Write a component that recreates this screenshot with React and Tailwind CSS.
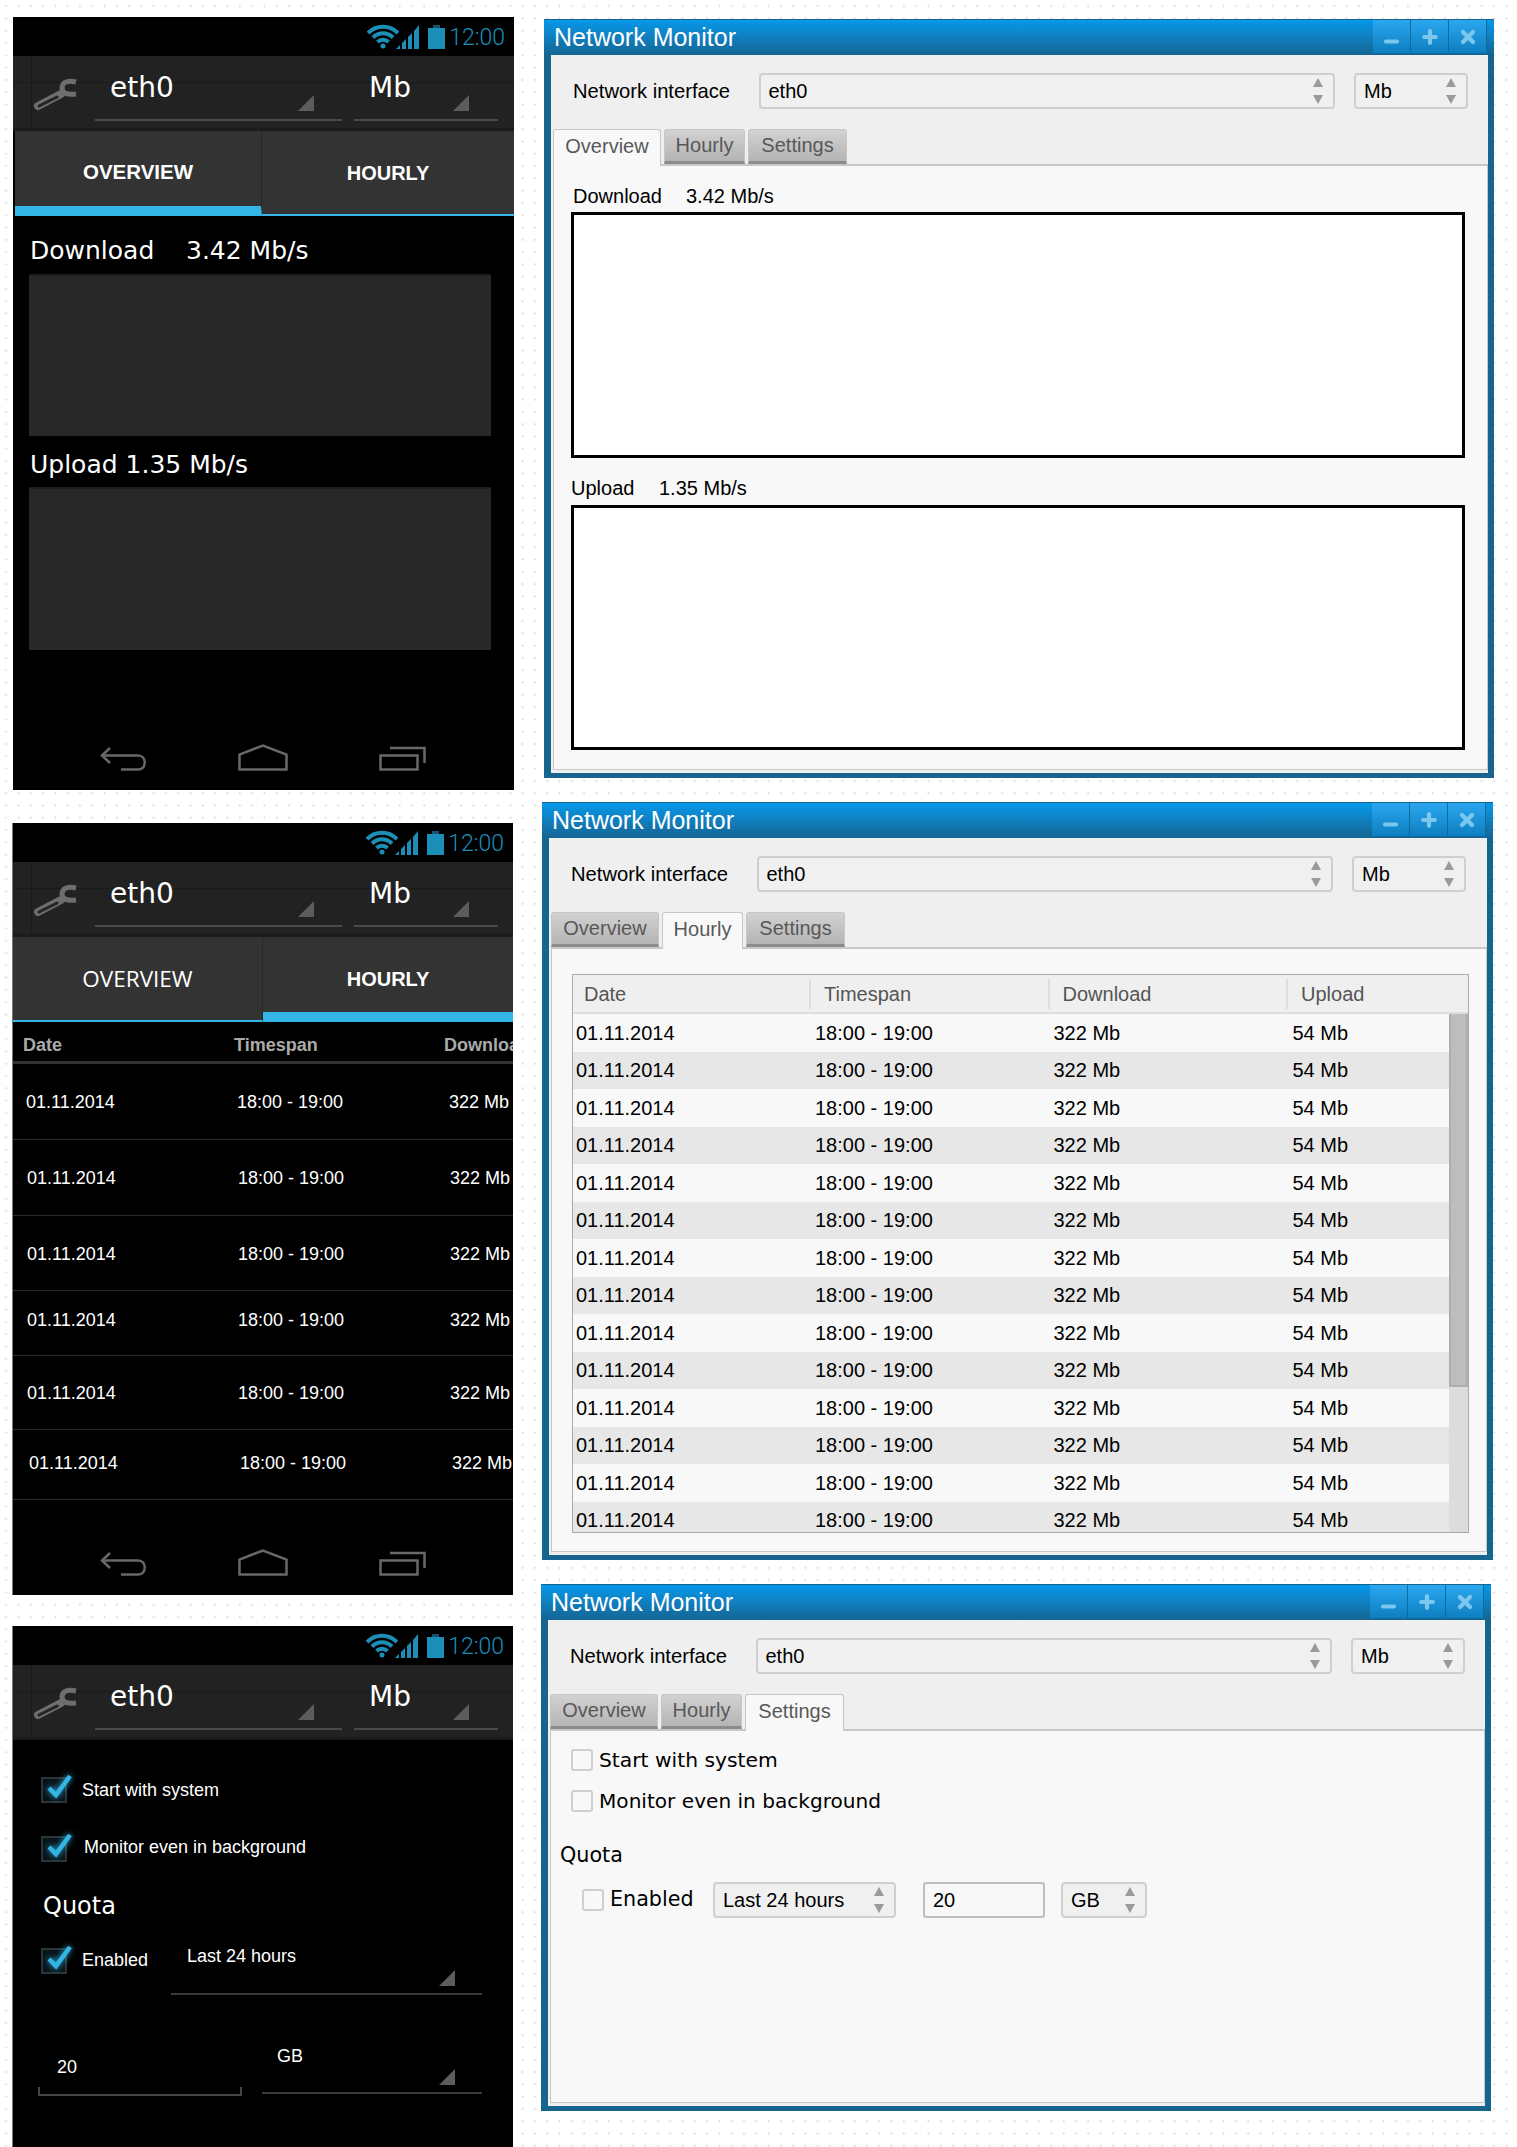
import { Minus, Plus, X } from "lucide-react"

const dejavu = "[font-family:'DejaVu_Sans',sans-serif]"

function Wrench() {
  return (
    <svg width="46" height="34" viewBox="0 0 46 34" fill="none" className="shrink-0">
      <path d="M44 4 C36 2 30 4 30 10 C30 15 35 17 44 16" stroke="#6e6e6e" strokeWidth="5" />
      <path d="M29 16 L6 28" stroke="#6e6e6e" strokeWidth="8" strokeLinecap="round" />
      <path d="M25 19 L7 28" stroke="#242424" strokeWidth="3" strokeLinecap="round" />
    </svg>
  )
}

function StatusBar() {
  return (
    <div className="h-[39px] flex items-center justify-end pr-[9px] pt-[2px]">
      <svg width="32" height="25" viewBox="0 0 32 25" fill="none" stroke="#1b8fb8" className="mr-[-3px] mt-[-2px]">
        <path d="M1 9 A21 21 0 0 1 31 9" strokeWidth="4" />
        <path d="M6 13.500 A14 14 0 0 1 26 13.500" strokeWidth="4" />
        <path d="M10.500 18 A8 8 0 0 1 21.500 18" strokeWidth="4" />
        <circle cx="16" cy="22" r="2.500" fill="#1b8fb8" stroke="none" />
      </svg>
      <svg width="24" height="24" viewBox="0 0 24 24" fill="#1b8fb8" className="mr-[8px] mt-[-2px]">
        <polygon points="0,24 4,20 4,24" />
        <polygon points="6,24 6,18 10,14 10,24" />
        <polygon points="12,24 12,12 16,8 16,24" />
        <polygon points="18,24 18,6 23,0 23,24" />
      </svg>
      <svg width="17" height="24" viewBox="0 0 17 24" className="mr-[4px] mt-[-2px]">
        <rect x="5" y="0" width="7" height="3" fill="#14566e" />
        <rect x="0" y="3" width="17" height="21" fill="#1b8fb8" />
      </svg>
      <span className="text-[23px] leading-none text-[#1b8fb8] [font-family:Roboto,sans-serif] font-light">12:00</span>
    </div>
  )
}

function Triangle({ className }) {
  return (
    <svg width="16" height="16" viewBox="0 0 16 16" className={"absolute " + className}>
      <polygon points="0,16 16,0 16,16" fill="#5c5c5c" />
    </svg>
  )
}

function ActionBar() {
  return (
    <div className="relative h-[75px] bg-[#222222] flex pl-[19px] border-b-[3px] border-[#1b1b1b]">
      <div className="absolute left-[18px] top-0 bottom-0 w-px bg-[#1a1a1a]" />
      <div className="absolute left-0 right-0 top-[26px] h-px bg-[#1a1a1a]" />
      <div className="relative mt-[22px]">
        <Wrench />
      </div>
      <div className={"relative ml-[17px] mt-[8px] w-[247px] h-[57px] pl-[15px] pt-[7px] border-b-[2px] border-[#4a4a4a] text-white text-[28px] leading-[34px] " + dejavu}>
        eth0
        <Triangle className="right-[28px] bottom-[8px]" />
      </div>
      <div className={"relative ml-[12px] mt-[8px] w-[144px] h-[57px] pl-[15px] pt-[7px] border-b-[2px] border-[#4a4a4a] text-white text-[28px] leading-[34px] " + dejavu}>
        Mb
        <Triangle className="right-[29px] bottom-[8px]" />
      </div>
    </div>
  )
}

function NavBar() {
  return (
    <div className="flex items-end pl-[87px] gap-[91px] pb-[19px]">
      <svg width="47" height="25" viewBox="0 0 47 25" fill="none" stroke="#686868" strokeWidth="2.500">
        <path d="M10 2 L2 9.500 L10 17" />
        <path d="M2 9.500 H38 C47 9.500 47 23.500 38 23.500 H21" />
      </svg>
      <svg width="50" height="27" viewBox="0 0 50 27" fill="none" stroke="#686868" strokeWidth="2.500">
        <path d="M1.500 25.500 V10.500 L25 1.500 L48.500 10.500 V25.500 Z" />
      </svg>
      <svg width="47" height="25" viewBox="0 0 47 25" fill="none" stroke="#686868" strokeWidth="2.500">
        <rect x="1.500" y="9.500" width="37" height="14" />
        <path d="M11 2 H45.500 V17" />
      </svg>
    </div>
  )
}

function PhoneTabs({ active }) {
  const overviewOn = active === "overview"
  return (
    <div className={"flex h-[85px] bg-[#333333] " + (overviewOn ? "ml-[2px]" : "")}>
      <div className={"flex-1 flex items-center justify-center border-r border-[#262626] text-white " + (overviewOn ? "border-b-[10px] border-b-[#33b5e5] pt-[8px] font-bold text-[20.500px]" : "border-b-[2px] border-b-[#33b5e5] text-[22.500px] [font-family:'Open_Sans',sans-serif]")}>
        OVERVIEW
      </div>
      <div className={"flex items-center justify-center text-white text-[20px] font-bold " + (overviewOn ? "w-[252px] border-b-[2px] border-b-[#33b5e5]" : "w-[250px] border-b-[10px] border-b-[#33b5e5] pt-[8px]")}>
        HOURLY
      </div>
    </div>
  )
}

function Phone({ className, edge, children, nav = true }) {
  return (
    <div className={"w-[501px] bg-black flex flex-col overflow-hidden " + className + " " + edge}>
      <StatusBar />
      <ActionBar />
      <div className="flex-1 min-h-0">{children}</div>
      {nav && <NavBar />}
    </div>
  )
}

function PhoneOverview() {
  return (
    <div>
      <PhoneTabs active="overview" />
      <div className={"pl-[17px] mt-[19px] h-[32px] text-white text-[25px] leading-[32px] flex " + dejavu}>
        <span className="w-[156px]">Download</span>
        <span>3.42 Mb/s</span>
      </div>
      <div className="ml-[16px] mt-[7px] w-[462px] h-[162px] bg-[#282828] border-t-2 border-[#1e1e1e]" />
      <div className={"pl-[17px] mt-[13px] h-[32px] text-white text-[25px] leading-[32px] " + dejavu}>Upload 1.35 Mb/s</div>
      <div className="ml-[16px] mt-[6px] w-[462px] h-[163px] bg-[#282828] border-t-2 border-[#1e1e1e]" />
    </div>
  )
}

const phoneRows = [
  "h-[76px] pl-[13px] pt-[2px]",
  "h-[76px] pl-[14px] pt-[2px]",
  "h-[75px] pl-[14px] pt-[2px]",
  "h-[65px] pl-[14px] pb-[6px]",
  "h-[74px] pl-[14px] pt-[2px]",
  "h-[70px] pl-[16px] pb-[2px]",
]

function PhoneHourly() {
  return (
    <div>
      <PhoneTabs active="hourly" />
      <div className="flex items-center h-[42px] pl-[10px] pt-[8px] text-[18px] font-bold text-[#aaaaaa] border-b-[3px] border-[#333333] whitespace-nowrap">
        <span className="w-[211px] shrink-0">Date</span>
        <span className="w-[210px] shrink-0">Timespan</span>
        <span>Download</span>
      </div>
      {phoneRows.map((row) => (
        <div key={row} className={"flex items-center text-white text-[18px] border-b border-[#2a2a2a] whitespace-nowrap " + row}>
          <span className="w-[211px] shrink-0">01.11.2014</span>
          <span className="w-[212px] shrink-0">18:00 - 19:00</span>
          <span>322 Mb</span>
        </div>
      ))}
    </div>
  )
}

function PhoneCheck({ className }) {
  return (
    <div className={"relative w-[26px] h-[26px] shrink-0 border-2 border-[#2b3438] bg-[#071319] " + className}>
      <svg width="28" height="28" viewBox="0 0 28 28" fill="none" className="absolute left-[3px] top-[-7px] drop-shadow-[0_0_3px_#33b5e5]">
        <path d="M3 16 L10 23 L24 4" stroke="#33b5e5" strokeWidth="4.500" />
      </svg>
    </div>
  )
}

function PhoneSettings() {
  return (
    <div className="text-white text-[18px]">
      <div className="flex items-center pt-[35px] pl-[28px] gap-[15px]">
        <PhoneCheck />
        <span className="mt-[2px]">Start with system</span>
      </div>
      <div className="flex items-center mt-[30px] pl-[28px] gap-[17px]">
        <PhoneCheck />
        <span className="mb-[2px]">Monitor even in background</span>
      </div>
      <div className={"mt-[28px] pl-[30px] h-[30px] text-[24px] leading-[30px] " + dejavu}>Quota</div>
      <div className="flex items-start mt-[20px] pl-[28px]">
        <PhoneCheck className="mt-[7px]" />
        <span className="ml-[15px] mt-[7px] leading-[24px] w-[89px]">Enabled</span>
        <div className="relative w-[311px] h-[54px] pl-[16px] pt-[3px] leading-[24px] border-b-[2px] border-[#3a3a3a]">
          Last 24 hours
          <Triangle className="right-[27px] bottom-[7px]" />
        </div>
      </div>
      <div className="flex items-start mt-[49px] pl-[25px]">
        <div className="w-[204px] h-[52px]">
          <div className="pl-[19px] pt-[11px] h-[43px] leading-[24px]">20</div>
          <div className="h-[9px] border-x-2 border-b-2 border-[#444444]" />
        </div>
        <div className="relative ml-[20px] w-[220px] h-[50px] pl-[15px] leading-[24px] border-b-[2px] border-[#3a3a3a]">
          GB
          <Triangle className="right-[27px] bottom-[7px]" />
        </div>
      </div>
    </div>
  )
}

function Arrows() {
  return (
    <svg width="10" height="26" viewBox="0 0 10 26" fill="#9a9a9a" className="absolute right-[10px] top-[3px]">
      <polygon points="5,0 10,9 0,9" />
      <polygon points="0,17 10,17 5,26" />
    </svg>
  )
}

function Combo({ className, children }) {
  return (
    <div className={"relative h-[36px] flex items-center pl-[8px] border-2 border-[#cfcfcf] rounded-[4px] bg-[#f0f0f0] text-[20px] text-black " + className}>
      {children}
      <Arrows />
    </div>
  )
}

function WinTab({ label, active, className }) {
  return (
    <div
      className={
        "flex items-center justify-center rounded-t-[3px] border-x border-t border-[#c6c6c6] text-[20px] text-[#585858] " +
        (active
          ? "bg-[#f8f8f8] relative z-10 mb-[-2px] h-[37px] pb-[5px]"
          : "h-[35px] pb-[2px] bg-linear-to-b from-[#d2d2d2] to-[#b4b4b4] border-b-[3px] border-b-[#8c8c8c]") +
        " " + className
      }
    >
      {label}
    </div>
  )
}

function Window({ tab, className, children }) {
  return (
    <div className={"bg-[#15658f] flex flex-col " + className}>
      <div className="h-[36px] shrink-0 flex items-start pl-[10px] pr-[7px] bg-linear-to-b from-[#0399ea] to-[#146594] border-t border-[#15658f]">
        <span className="flex-1 text-white text-[25px] leading-[35px]">Network Monitor</span>
        {[0, 1, 2].map((i) => (
          <div key={i} className="w-[38px] h-[33px] flex items-center justify-center bg-linear-to-b from-[#2aa7f0] to-[#0b7fc0] border-r border-[#0f6a9e] text-[#7cc7ee]">
            {i === 0 && <Minus size={19} strokeWidth={5} className="mt-[9px]" />}
            {i === 1 && <Plus size={20} strokeWidth={5} />}
            {i === 2 && <X size={20} strokeWidth={5} />}
          </div>
        ))}
      </div>
      <div className="flex-1 min-h-0 ml-[7px] mr-[6px] mb-[5px] bg-[#efefef] flex flex-col">
        <div className="flex items-center pt-[18px] pl-[22px]">
          <span className="w-[185.500px] text-[20.200px] text-black">Network interface</span>
          <Combo className="w-[576px]">eth0</Combo>
          <Combo className="ml-[19.500px] w-[114px]">Mb</Combo>
        </div>
        <div className="flex items-end mt-[20px] ml-[2px] gap-[3px]">
          <WinTab label="Overview" active={tab === "overview"} className="w-[108px]" />
          <WinTab label="Hourly" active={tab === "hourly"} className="w-[81px]" />
          <WinTab label="Settings" active={tab === "settings"} className="w-[99px]" />
        </div>
        <div className="flex-1 min-h-0 ml-[2px] mb-[3px] bg-[#f8f8f8] border-x border-b border-t-2 border-[#c8c8c8]">
          {children}
        </div>
      </div>
    </div>
  )
}

function WinOverview() {
  return (
    <div className="text-[20px] text-black">
      <div className="flex pl-[19px] pt-[18px] leading-[24px]">
        <span className="w-[113px]">Download</span>
        <span>3.42 Mb/s</span>
      </div>
      <div className="ml-[17px] mt-[4px] w-[894px] h-[246px] bg-white border-[3px] border-black" />
      <div className="flex pl-[17px] mt-[18px] leading-[24px]">
        <span className="w-[88px]">Upload</span>
        <span>1.35 Mb/s</span>
      </div>
      <div className="ml-[17px] mt-[5px] w-[894px] h-[245px] bg-white border-[3px] border-black" />
    </div>
  )
}

const tableRows = Array.from({ length: 14 }, (_, i) => i)

function WinHourly() {
  return (
    <div className="ml-[20px] mt-[25px] w-[897px] h-[559px] border border-[#aaaaaa] bg-[#f8f8f8] flex flex-col overflow-hidden text-[20px]">
      <div className="h-[39px] shrink-0 flex items-center pt-[1px] bg-[#efefef] border-b-2 border-[#dddddd] text-[#555555]">
        <span className="w-[236px] pl-[11px]">Date</span>
        <span className="w-[238.500px] pl-[13px] border-l-2 border-[#dddddd]">Timespan</span>
        <span className="w-[238.500px] pl-[13px] border-l-2 border-[#dddddd]">Download</span>
        <span className="flex-1 pl-[13px] border-l-2 border-[#dddddd]">Upload</span>
      </div>
      <div className="flex-1 min-h-0 flex">
        <div className="flex-1 overflow-hidden">
          {tableRows.map((i) => (
            <div key={i} className={"h-[37.500px] shrink-0 pl-[3px] flex items-center text-black " + (i % 2 ? "bg-[#e7e7e7]" : "bg-[#f8f8f8]")}>
              <span className="w-[239px]">01.11.2014</span>
              <span className="w-[238.500px]">18:00 - 19:00</span>
              <span className="w-[239px]">322 Mb</span>
              <span>54 Mb</span>
            </div>
          ))}
        </div>
        <div className="w-[19px] bg-[#dcdcdc]">
          <div className="h-[373px] bg-[#bdbdbd] border-x-2 border-b-2 border-[#aeaeae]" />
        </div>
      </div>
    </div>
  )
}

function WinCheck({ className }) {
  return <div className={"w-[22px] h-[22px] shrink-0 rounded-[3px] border-2 border-[#cfcfcf] bg-[#f8f8f8] " + className} />
}

function WinSettings() {
  return (
    <div className={"text-[20.700px] text-black " + dejavu}>
      <div className="flex items-center h-[30px] mt-[14px] pl-[20px] gap-[6px] text-[20.300px]">
        <WinCheck />
        <span>Start with system</span>
      </div>
      <div className="flex items-center h-[30px] mt-[11px] pl-[20px] gap-[6px] text-[20.100px]">
        <WinCheck />
        <span>Monitor even in background</span>
      </div>
      <div className="h-[30px] leading-[30px] mt-[24px] pl-[9px]">Quota</div>
      <div className="flex items-center mt-[12px] pl-[31px]">
        <WinCheck />
        <span className="ml-[6px] w-[103px]">Enabled</span>
        <div className="[font-family:'Liberation_Sans',sans-serif] flex items-center">
          <Combo className="w-[183px]">Last 24 hours</Combo>
          <div className="ml-[27px] w-[122px] h-[36px] flex items-center pl-[8px] border-2 border-[#bdbdbd] rounded-[3px] bg-[#f8f8f8] text-[20px]">20</div>
          <Combo className="ml-[16px] w-[86px]">GB</Combo>
        </div>
      </div>
    </div>
  )
}

export default function App() {
  return (
    <div className="w-[1517px] h-[2147px] overflow-hidden flex items-start bg-white bg-[radial-gradient(circle,#e2e2e2_1px,transparent_1px)] bg-size-[12.300px_12.300px] [font-family:'Liberation_Sans',sans-serif]">
      <div className="w-[530px] shrink-0 flex flex-col">
        <Phone className="ml-[13px] mt-[17px] h-[773px]" edge="">
          <PhoneOverview />
        </Phone>
        <Phone className="ml-[12px] mt-[33px] h-[772px]" edge="border-l border-[#777777]">
          <PhoneHourly />
        </Phone>
        <Phone className="ml-[12px] mt-[31px] h-[521px]" edge="border-l border-[#777777]" nav={false}>
          <PhoneSettings />
        </Phone>
      </div>
      <div className="flex-1 flex flex-col">
        <Window tab="overview" className="ml-[14px] mt-[19px] w-[950px] h-[759px]">
          <WinOverview />
        </Window>
        <Window tab="hourly" className="ml-[12px] mt-[24px] w-[951px] h-[758px]">
          <WinHourly />
        </Window>
        <Window tab="settings" className="ml-[11px] mt-[24px] w-[950px] h-[527px]">
          <WinSettings />
        </Window>
      </div>
    </div>
  )
}
